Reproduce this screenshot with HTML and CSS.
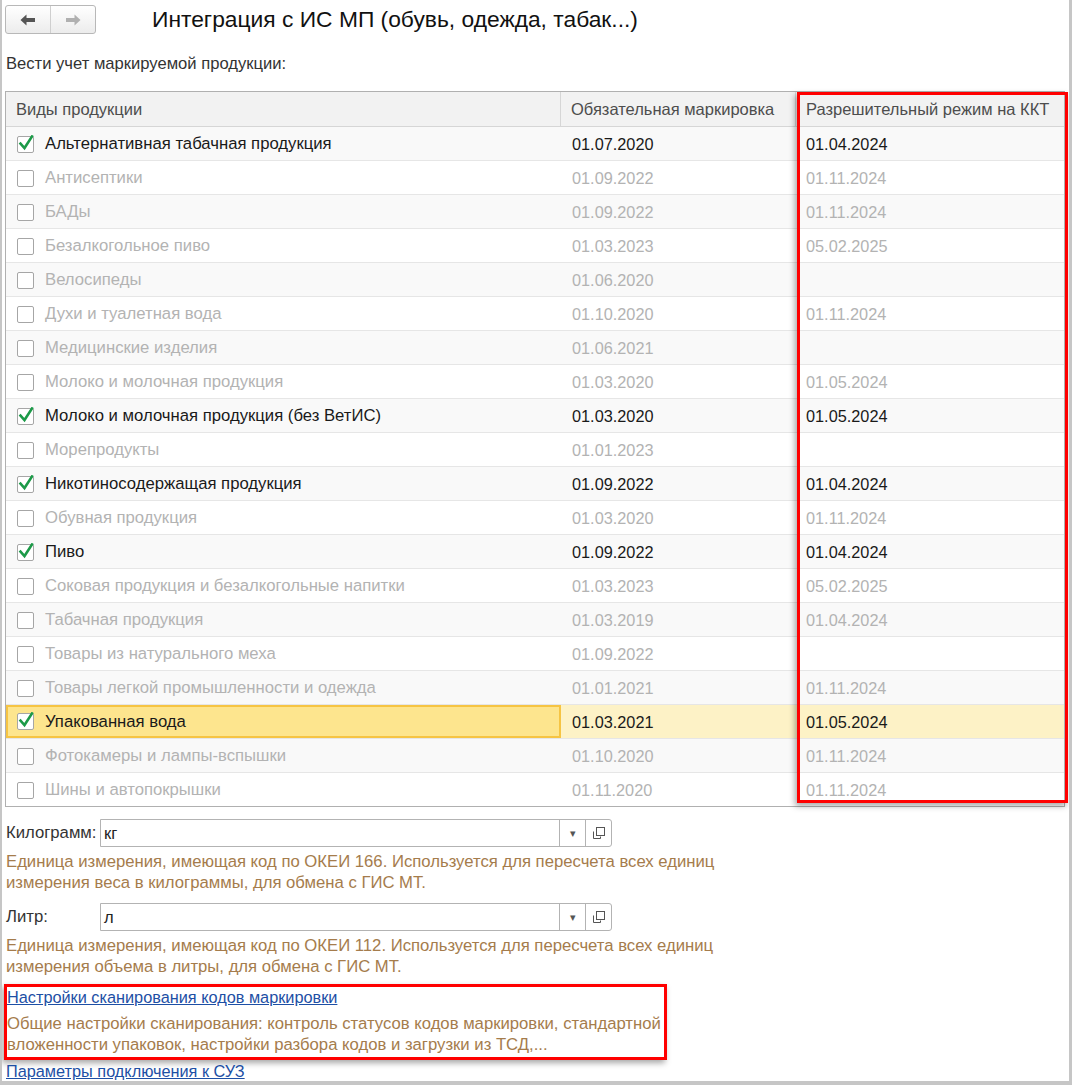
FILE: index.html
```html
<!DOCTYPE html>
<html lang="ru">
<head>
<meta charset="utf-8">
<title>Интеграция с ИС МП</title>
<link rel="stylesheet" href="styles.css">
</head>
<body>
<div class="window">
  <div class="topbar">
    <div class="nav">
      <span class="nav-btn back"><svg width="16" height="12" viewBox="0 0 16 12"><path d="M0.5 6 L6.5 0.5 L6.5 4 L15 4 L15 8 L6.5 8 L6.5 11.5 Z" fill="#555"/></svg></span>
      <span class="nav-btn fwd"><svg width="16" height="12" viewBox="0 0 16 12"><path d="M15.5 6 L9.5 0.5 L9.5 4 L1 4 L1 8 L9.5 8 L9.5 11.5 Z" fill="#b0b0b0"/></svg></span>
    </div>
    <h1 class="title">Интеграция с ИС МП (обувь, одежда, табак...)</h1>
  </div>

  <div class="caption">Вести учет маркируемой продукции:</div>

  <div class="table-wrap">
    <div class="table">
      <div class="row head">
        <div class="cell c1">Виды продукции</div>
        <div class="cell c2">Обязательная маркировка</div>
        <div class="cell c3">Разрешительный режим на ККТ</div>
      </div>
      <div class="row odd on"><div class="cell c1"><span class="cb"><svg viewBox="0 0 18 18"><path d="M3.5 8.5 L7.5 13 L15 1.5"/></svg></span>Альтернативная табачная продукция</div><div class="cell c2">01.07.2020</div><div class="cell c3">01.04.2024</div></div>
      <div class="row"><div class="cell c1"><span class="cb"></span>Антисептики</div><div class="cell c2">01.09.2022</div><div class="cell c3">01.11.2024</div></div>
      <div class="row odd"><div class="cell c1"><span class="cb"></span>БАДы</div><div class="cell c2">01.09.2022</div><div class="cell c3">01.11.2024</div></div>
      <div class="row"><div class="cell c1"><span class="cb"></span>Безалкогольное пиво</div><div class="cell c2">01.03.2023</div><div class="cell c3">05.02.2025</div></div>
      <div class="row odd"><div class="cell c1"><span class="cb"></span>Велосипеды</div><div class="cell c2">01.06.2020</div><div class="cell c3"></div></div>
      <div class="row"><div class="cell c1"><span class="cb"></span>Духи и туалетная вода</div><div class="cell c2">01.10.2020</div><div class="cell c3">01.11.2024</div></div>
      <div class="row odd"><div class="cell c1"><span class="cb"></span>Медицинские изделия</div><div class="cell c2">01.06.2021</div><div class="cell c3"></div></div>
      <div class="row"><div class="cell c1"><span class="cb"></span>Молоко и молочная продукция</div><div class="cell c2">01.03.2020</div><div class="cell c3">01.05.2024</div></div>
      <div class="row odd on"><div class="cell c1"><span class="cb"><svg viewBox="0 0 18 18"><path d="M3.5 8.5 L7.5 13 L15 1.5"/></svg></span>Молоко и молочная продукция (без ВетИС)</div><div class="cell c2">01.03.2020</div><div class="cell c3">01.05.2024</div></div>
      <div class="row"><div class="cell c1"><span class="cb"></span>Морепродукты</div><div class="cell c2">01.01.2023</div><div class="cell c3"></div></div>
      <div class="row odd on"><div class="cell c1"><span class="cb"><svg viewBox="0 0 18 18"><path d="M3.5 8.5 L7.5 13 L15 1.5"/></svg></span>Никотиносодержащая продукция</div><div class="cell c2">01.09.2022</div><div class="cell c3">01.04.2024</div></div>
      <div class="row"><div class="cell c1"><span class="cb"></span>Обувная продукция</div><div class="cell c2">01.03.2020</div><div class="cell c3">01.11.2024</div></div>
      <div class="row odd on"><div class="cell c1"><span class="cb"><svg viewBox="0 0 18 18"><path d="M3.5 8.5 L7.5 13 L15 1.5"/></svg></span>Пиво</div><div class="cell c2">01.09.2022</div><div class="cell c3">01.04.2024</div></div>
      <div class="row"><div class="cell c1"><span class="cb"></span>Соковая продукция и безалкогольные напитки</div><div class="cell c2">01.03.2023</div><div class="cell c3">05.02.2025</div></div>
      <div class="row odd"><div class="cell c1"><span class="cb"></span>Табачная продукция</div><div class="cell c2">01.03.2019</div><div class="cell c3">01.04.2024</div></div>
      <div class="row"><div class="cell c1"><span class="cb"></span>Товары из натурального меха</div><div class="cell c2">01.09.2022</div><div class="cell c3"></div></div>
      <div class="row odd"><div class="cell c1"><span class="cb"></span>Товары легкой промышленности и одежда</div><div class="cell c2">01.01.2021</div><div class="cell c3">01.11.2024</div></div>
      <div class="row on selected"><div class="cell c1"><span class="cb"><svg viewBox="0 0 18 18"><path d="M3.5 8.5 L7.5 13 L15 1.5"/></svg></span>Упакованная вода</div><div class="cell c2">01.03.2021</div><div class="cell c3">01.05.2024</div></div>
      <div class="row odd"><div class="cell c1"><span class="cb"></span>Фотокамеры и лампы-вспышки</div><div class="cell c2">01.10.2020</div><div class="cell c3">01.11.2024</div></div>
      <div class="row last"><div class="cell c1"><span class="cb"></span>Шины и автопокрышки</div><div class="cell c2">01.11.2020</div><div class="cell c3">01.11.2024</div></div>
    </div>
    <div class="mark mark-col"></div>
  </div>

  <div class="field first">
    <span class="field-label">Килограмм:</span>
    <div class="input">
      <span class="input-text">кг</span>
      <span class="input-btn drop">&#9662;</span>
      <span class="input-btn open"><svg width="13" height="13" viewBox="0 0 13 13"><rect x="4.5" y="0.5" width="8" height="8" fill="none" stroke="#555"/><path d="M1.5 4.5 V11.5 H8.5 V9.5" fill="none" stroke="#555"/></svg></span>
    </div>
  </div>
  <div class="hint">Единица измерения, имеющая код по ОКЕИ 166. Используется для пересчета всех единиц<br>измерения веса в килограммы, для обмена с ГИС МТ.</div>

  <div class="field">
    <span class="field-label">Литр:</span>
    <div class="input">
      <span class="input-text">л</span>
      <span class="input-btn drop">&#9662;</span>
      <span class="input-btn open"><svg width="13" height="13" viewBox="0 0 13 13"><rect x="4.5" y="0.5" width="8" height="8" fill="none" stroke="#555"/><path d="M1.5 4.5 V11.5 H8.5 V9.5" fill="none" stroke="#555"/></svg></span>
    </div>
  </div>
  <div class="hint">Единица измерения, имеющая код по ОКЕИ 112. Используется для пересчета всех единиц<br>измерения объема в литры, для обмена с ГИС МТ.</div>

  <div class="mark mark-box">
    <a class="link" href="#">Настройки сканирования кодов маркировки</a>
    <div class="hint hint-in">Общие настройки сканирования: контроль статусов кодов маркировки, стандартной<br>вложенности упаковок, настройки разбора кодов и загрузки из ТСД,...</div>
  </div>
  <a class="link link-last" href="#">Параметры подключения к СУЗ</a>
</div>
</body>
</html>
```

FILE: styles.css
```css
* { box-sizing: border-box; }
html, body { margin: 0; padding: 0; background: #fff; }
body {
  font-family: "Liberation Sans", Arial, sans-serif;
  font-size: 16.7px;
  color: #333;
}
.window {
  width: 1072px;
  height: 1085px;
  border-left: 2px solid #c6c6c6;
  border-right: 3px solid #c6c6c6;
  border-bottom: 4px solid #c6c6c6;
  padding: 5px 0 0 3px;
  overflow: hidden;
}
.topbar {
  display: flex;
  align-items: center;
  height: 29px;
}
.nav {
  display: flex;
  width: 91px;
  height: 29px;
  border: 1px solid #b8b8b8;
  border-radius: 3px;
  background: linear-gradient(#ffffff, #ececec);
}
.nav-btn {
  flex: 1;
  display: flex;
  align-items: center;
  justify-content: center;
}
.nav-btn.back { border-right: 1px solid #cfcfcf; }
.title {
  margin: 0 0 0 56px;
  font-size: 22.8px;
  font-weight: normal;
  color: #111;
  line-height: 29px;
}
.caption {
  margin-top: 20px;
  padding-left: 1px;
  line-height: 20px;
  font-size: 16.6px;
  color: #333;
}
.table-wrap {
  position: relative;
  margin-top: 17px;
  width: 1060px;
}
.table {
  border: 1px solid #b0b0b0;
}
.row {
  display: grid;
  grid-template-columns: 555px 235px 1fr;
  height: 34px;
  border-bottom: 1px solid #e6e6e6;
  align-items: stretch;
  color: #b3b3b3;
}
.row.last { border-bottom: none; height: 33px; }
.row.odd { background: #f9f9f9; }
.row.on { color: #1a1a1a; }
.row.head {
  height: 35px;
  background: #f2f2f2;
  color: #4d4d4d;
  border-bottom: 1px solid #d6d6d6;
}
.row.head .cell { padding-left: 10px; font-size: 16.5px; }
.row.head .c1, .row.head .c2 { border-right: 1px solid #d6d6d6; }
.cell {
  display: flex;
  align-items: center;
  padding-top: 1px;
  white-space: nowrap;
  overflow: hidden;
}
.c1 { padding-left: 11px; }
.c2 { padding-left: 11px; font-size: 16.3px; }
.c3 { padding-left: 10px; font-size: 16.3px; }
.cb {
  flex: none;
  position: relative;
  width: 17px;
  height: 17px;
  margin-right: 11px;
  border: 1px solid #a6a6a6;
  border-radius: 2px;
  background: #fff;
}
.cb svg {
  position: absolute;
  left: -1px;
  top: -2px;
  width: 18px;
  height: 18px;
  fill: none;
  stroke: #1c9a48;
  stroke-width: 2.6;
  stroke-linecap: square;
}
.row.selected { background: #fdf2c6; }
.row.selected .c1 {
  background: #fde58e;
  border: 2px solid #f6c443;
  padding-left: 9px;
  padding-top: 0;
}
.mark {
  border: 3px solid #ff0000;
  box-shadow: -2px 3px 6px rgba(0, 0, 0, 0.35);
}
.mark-col {
  position: absolute;
  left: 792px;
  top: 1px;
  width: 271px;
  height: 711px;
}
.field {
  display: flex;
  align-items: center;
  margin-top: 10px;
  height: 28px;
}
.field.first { margin-top: 12px; }
.field-label {
  width: 95px;
  padding-left: 1px;
  font-size: 16.7px;
  color: #333;
}
.input {
  display: flex;
  width: 512px;
  height: 28px;
  border: 1px solid #b3b3b3;
  border-radius: 0 3px 3px 0;
  background: #fff;
}
.input-text {
  flex: 1;
  padding-left: 3px;
  line-height: 26px;
  font-size: 16.5px;
  color: #222;
}
.input-btn {
  width: 26px;
  display: flex;
  align-items: center;
  justify-content: center;
  border-left: 1px solid #b3b3b3;
  color: #555;
  font-size: 11px;
}
.hint {
  margin-top: 4px;
  padding-left: 1px;
  font-size: 16.7px;
  line-height: 21px;
  color: #a57c4c;
}
.mark-box {
  margin-top: 7px;
  margin-left: -1px;
  width: 663px;
  padding: 0 0 2px 0;
}
.hint-in { margin-top: 5px; padding-left: 0; }
.link {
  display: block;
  color: #1d4fa5;
  text-decoration: underline;
  font-size: 16.3px;
  line-height: 21px;
}
.link-last { margin-top: 1px; padding-left: 1px; line-height: 20px; }
```
